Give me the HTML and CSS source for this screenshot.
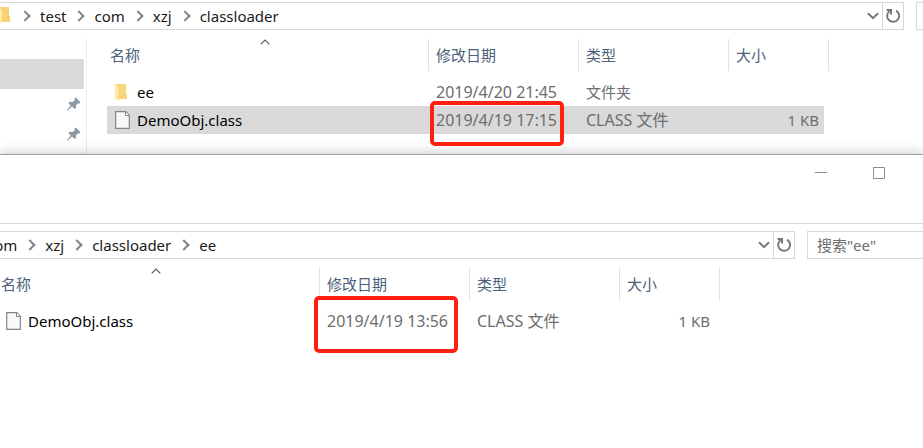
FILE: index.html
```html
<!DOCTYPE html>
<html lang="zh-CN">
<head>
<meta charset="utf-8">
<title>classloader</title>
<link rel="stylesheet" href="styles.css">
</head>
<body>
<svg class="defs" aria-hidden="true">
  <symbol id="down" viewBox="0 0 12 8"><path d="M1 1.2 6 6.2 11 1.2" fill="none" stroke="#777" stroke-width="2"/></symbol>
  <symbol id="refresh" viewBox="0 0 16 16"><path d="M11 2.6A6 6 0 1 1 4.6 3" fill="none" stroke="#777" stroke-width="2"/><path d="M1.6 2H6V6.6" fill="none" stroke="#777" stroke-width="2"/></symbol>
  <symbol id="sort" viewBox="0 0 10 6"><path d="M.7 5.3 5 1 9.3 5.3" fill="none" stroke="#555" stroke-width="1.1"/></symbol>
  <symbol id="doc" viewBox="0 0 15 18"><path d="M.7.7H10.8L14.3 4.2V17.3H.7Z" fill="#f7f9fa" stroke="#858585" stroke-width="1.2"/><path d="M10.5 1V4.5H14" fill="#fff" stroke="#858585"/></symbol>
  <symbol id="folder" viewBox="0 0 12 17"><path d="M0 0H11V10H12V15H0Z" fill="#f7d77e"/><path d="M0 0 4 3V17L0 15Z" fill="#ffe9a6"/><path d="M4 3V15" stroke="#efcb68" stroke-width=".6"/></symbol>
  <symbol id="pin" viewBox="0 0 14 14"><path d="M8.8.6 13.4 5 12.4 6.6 10.8 6.4 9 8.2 9.2 10.8 7.6 12 5 9.6.8 13.6 0 13 3.8 8.4 1.4 6.2 2.6 4.8 5.6 5 7.8 3.2 7.4 1.6Z" fill="#8d9aa3"/></symbol>
</svg>

<section class="window">
  <div class="toolbar">
    <nav class="address" aria-label="路径">
      <svg class="crumb-folder" viewBox="0 0 10 17"><path d="M0 0H9V9H10V15H0Z" fill="#f7d274"/><path d="M0 1 2 3V15L0 17Z" fill="#ffe9a6"/></svg>
      <ol class="crumbs">
        <li><a href="#">test</a></li>
        <li><a href="#">com</a></li>
        <li><a href="#">xzj</a></li>
        <li><a href="#">classloader</a></li>
      </ol>
      <button class="history" aria-label="历史"><svg><use href="#down"/></svg></button>
      <button class="reload" aria-label="刷新"><svg><use href="#refresh"/></svg></button>
    </nav>
    <input class="search search-edge" type="text" aria-label="搜索">
  </div>
  <div class="body">
    <aside class="sidebar">
      <div class="side-item current"></div>
      <div class="side-item"><svg><use href="#pin"/></svg></div>
      <div class="side-item"><svg><use href="#pin"/></svg></div>
    </aside>
    <table class="files">
      <colgroup><col class="c-name"><col class="c-mid"><col class="c-mid"><col class="c-size"></colgroup>
      <thead><tr><th>名称<svg class="sort"><use href="#sort"/></svg></th><th>修改日期</th><th>类型</th><th>大小</th></tr></thead>
      <tbody>
        <tr><td><span class="file"><svg class="icon-folder"><use href="#folder"/></svg>ee</span></td><td class="latin">2019/4/20 21:45</td><td>文件夹</td><td></td></tr>
        <tr class="selected"><td><span class="file"><svg class="icon-doc"><use href="#doc"/></svg>DemoObj.class</span></td><td class="latin">2019/4/19 17:15<i class="mark mark-top"></i></td><td class="latin">CLASS 文件</td><td>1 KB</td></tr>
      </tbody>
    </table>
  </div>
</section>

<section class="window front">
  <header class="titlebar">
    <button aria-label="最小化"><svg viewBox="0 0 12 12"><path d="M0 5.5H12" stroke="#8c8c8c"/></svg></button>
    <button aria-label="最大化"><svg viewBox="0 0 12 12"><path d="M.5.5H11.5V11.5H.5Z" fill="none" stroke="#8c8c8c"/></svg></button>
  </header>
  <div class="toolbar">
    <nav class="address" aria-label="路径">
      <ol class="crumbs">
        <li><a href="#">com</a></li>
        <li><a href="#">xzj</a></li>
        <li><a href="#">classloader</a></li>
        <li><a href="#">ee</a></li>
      </ol>
      <button class="history" aria-label="历史"><svg><use href="#down"/></svg></button>
      <button class="reload" aria-label="刷新"><svg><use href="#refresh"/></svg></button>
    </nav>
    <input class="search" type="text" aria-label="搜索" placeholder='搜索"ee"'>
  </div>
  <div class="body">
    <table class="files">
      <colgroup><col class="c-name"><col class="c-mid"><col class="c-mid"><col class="c-size"></colgroup>
      <thead><tr><th>名称<svg class="sort"><use href="#sort"/></svg></th><th>修改日期</th><th>类型</th><th>大小</th></tr></thead>
      <tbody>
        <tr><td><span class="file"><svg class="icon-doc"><use href="#doc"/></svg>DemoObj.class</span></td><td class="latin">2019/4/19 13:56<i class="mark mark-front"></i></td><td class="latin">CLASS 文件</td><td>1 KB</td></tr>
      </tbody>
    </table>
  </div>
</section>
</body>
</html>
```
FILE: styles.css
```css
* { box-sizing: border-box; }
body {
  margin: 0;
  background: #fff;
  color: #000;
  font: 15px/20px "Noto Sans", "Noto Sans CJK SC", sans-serif;
  overflow: hidden;
}
.defs { position: absolute; width: 0; height: 0; }
svg { display: block; flex: none; }
button { border: 0; background: none; padding: 0; display: flex; align-items: center; justify-content: center; }

.window { padding-top: 2px; background: #fff; }
.toolbar { display: flex; gap: 12px; height: 28px; }
.address {
  flex: 1;
  min-width: 0;
  display: flex;
  border: 1px solid #d9d9d9;
  border-left: 0;
}
.crumb-folder { width: 10px; height: 17px; margin: 4px 2px 0 0; }
.crumbs { flex: 1; display: flex; align-items: center; margin: 0; padding: 0; list-style: none; white-space: nowrap; }
.crumbs li { display: flex; align-items: center; }
.crumbs li::before {
  content: "";
  width: 6px;
  height: 6px;
  margin: 0 11px 0 9px;
  border: solid #858585;
  border-width: 2px 2px 0 0;
  transform: rotate(45deg);
}
.crumbs a { color: #1a1a1a; text-decoration: none; }
.history { width: 30px; justify-content: flex-end; padding-right: 3px; }
.history svg { width: 12px; height: 8px; }
.reload { width: 21px; border-left: 1px solid #d9d9d9; }
.reload svg { width: 16px; height: 16px; }
.search {
  width: 116px;
  border: 1px solid #d9d9d9;
  border-right: 0;
  padding: 0 9px;
  font: inherit;
  color: #6d6d6d;
}
.search::placeholder { color: #6d6d6d; opacity: 1; }
.search-edge { width: 7px; padding: 0; }

.body { display: flex; padding-top: 9px; }
.sidebar { width: 87px; border-right: 1px solid #ededed; padding-top: 20px; margin-right: 20px; height: 115px; }
.side-item { width: 84px; height: 30px; display: flex; align-items: center; justify-content: flex-end; padding-right: 3px; }
.side-item svg { width: 14px; height: 14px; }
.current { background: #d9d9d9; }

.files { width: 722px; table-layout: fixed; border-collapse: separate; border-spacing: 0; align-self: flex-start; }
.c-name { width: 322px; }
.c-mid { width: 150px; }
.c-size { width: 100px; }
.files th {
  position: relative;
  height: 32px;
  padding: 0 0 0 7px;
  border-right: 1px solid #e2e2e2;
  color: #4c607a;
  font-weight: 400;
  text-align: left;
}
.files th:first-child { padding-left: 3px; }
.sort { position: absolute; left: 153px; top: 0; width: 10px; height: 6px; }
.files tbody::before { content: ""; display: block; height: 7px; }
.files td { position: relative; height: 28px; padding: 0 0 0 7px; color: #6d6d6d; white-space: nowrap; }
.files td.latin { font-size: 16px; }
.files td:first-child { padding-left: 8px; color: #000; }
.files td:last-child { padding-right: 5px; border-right: 5px solid transparent; background-clip: padding-box; text-align: right; }
.selected td { background: #d9d9d9; }
.file { display: flex; align-items: center; }
.icon-folder { width: 12px; height: 17px; margin-right: 10px; }
.icon-doc { width: 15px; height: 18px; margin-right: 7px; }

.mark { position: absolute; z-index: 1; border: 4px solid #ff2010; border-radius: 5px; }
.mark-top { left: 1px; top: -5px; width: 134px; height: 45px; }
.mark-front { left: -6px; top: -11px; width: 144px; height: 57px; }

.front { position: relative; padding-top: 0; border-top: 1px solid #a0a0a0; box-shadow: 0 0 12px rgba(0, 0, 0, .25); min-height: 294px; }
.titlebar { display: flex; justify-content: flex-end; height: 69px; border-bottom: 1px solid #d9d9d9; margin-bottom: 7px; padding-right: 15px; }
.titlebar button { width: 58px; height: 36px; }
.titlebar svg { width: 12px; height: 12px; }
.front .crumbs { margin-left: -13px; }
.front .crumbs li:first-child::before { display: none; }
.front .files { margin-left: -2px; }
```
